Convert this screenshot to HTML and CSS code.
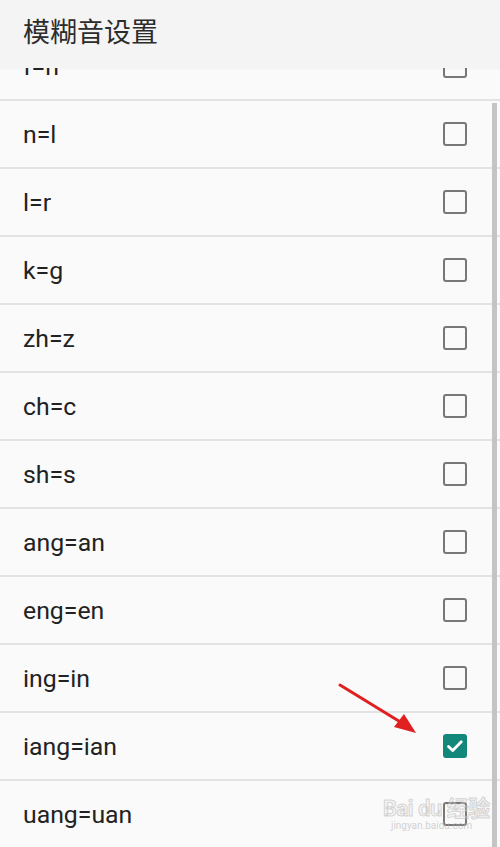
FILE: index.html
```html
<!DOCTYPE html>
<html>
<head>
<meta charset="utf-8">
<link rel="stylesheet" href="styles.css">
</head>
<body>
<div class="screen">
  <header class="topbar"><h1 class="title">模糊音设置</h1></header>
  <div class="list">
    <div class="row first"><span class="label">f=h</span><span class="box"></span></div>
    <div class="row"><span class="label">n=l</span><span class="box"></span></div>
    <div class="row"><span class="label">l=r</span><span class="box"></span></div>
    <div class="row"><span class="label">k=g</span><span class="box"></span></div>
    <div class="row"><span class="label">zh=z</span><span class="box"></span></div>
    <div class="row"><span class="label">ch=c</span><span class="box"></span></div>
    <div class="row"><span class="label">sh=s</span><span class="box"></span></div>
    <div class="row"><span class="label">ang=an</span><span class="box"></span></div>
    <div class="row"><span class="label">eng=en</span><span class="box"></span></div>
    <div class="row"><span class="label">ing=in</span><span class="box"></span></div>
    <div class="row"><span class="label">iang=ian</span><span class="box checked"><svg viewBox="0 0 24 24" width="24" height="24"><path d="M5.5 12.5l4.2 4 8.6-8.8" fill="none" stroke="#fff" stroke-width="2.8" stroke-linecap="round" stroke-linejoin="round"/></svg></span></div>
    <div class="row"><span class="label">uang=uan</span><span class="box"></span></div>
  </div>
  <div class="scrollbar"></div>
  <svg class="arrow" viewBox="0 0 500 847" width="500" height="847"><line x1="340" y1="685" x2="402" y2="723" stroke="#e02020" stroke-width="3" stroke-linecap="round"/><polygon points="416,733 394,727 404,714" fill="#e02020"/></svg>
  <div class="watermark"><span class="wm-big">Bai du 经验</span><span class="wm-small">jingyan.baidu.com</span></div>
</div>
</body>
</html>
```
FILE: styles.css
```css
html, body { margin: 0; padding: 0; }
body { width: 500px; height: 847px; overflow: hidden; background: #fafafa; font-family: Roboto, "Noto Sans CJK SC", sans-serif; }
.screen { position: relative; width: 500px; height: 847px; overflow: hidden; }
.topbar { position: relative; z-index: 2; height: 68px; background: #f4f4f4; display: flex; align-items: center; padding-left: 23px; box-shadow: 0 1px 2px rgba(0,0,0,0.04); }
.title { margin: 0; font-weight: 400; font-size: 27px; color: #2c2c2c; font-family: "Noto Sans CJK SC", sans-serif; transform: translateY(-4px); }
.list { padding-top: 0; }
.row { height: 66px; border-bottom: 2px solid #e3e3e3; display: flex; align-items: center; justify-content: space-between; padding: 0 33px 0 23px; background: #fafafa; }
.row.first { margin-top: -35px; }
.label { font-size: 24.8px; color: #222; }
.box { width: 20px; height: 20px; border: 2px solid #777; border-radius: 3px; position: relative; }
.box.checked { background: #12877a; border-color: #12877a; }
.box.checked svg { position: absolute; left: -2px; top: -2px; }
.scrollbar { position: absolute; z-index: 3; right: 3px; top: 103px; width: 5px; height: 744px; background: #c4c4c4; }
.arrow { position: absolute; z-index: 3; left: 0; top: 0; pointer-events: none; }
.watermark { position: absolute; z-index: 3; left: 383px; top: 790px; display: flex; flex-direction: column; }
.wm-big { font-size: 22px; font-weight: 700; color: rgba(230,230,230,0.4); -webkit-text-stroke: 1px rgba(170,170,170,0.45); letter-spacing: -0.5px; }
.wm-small { font-size: 10px; color: rgba(180,180,180,0.6); margin-top: -2px; padding-left: 8px; }
```
